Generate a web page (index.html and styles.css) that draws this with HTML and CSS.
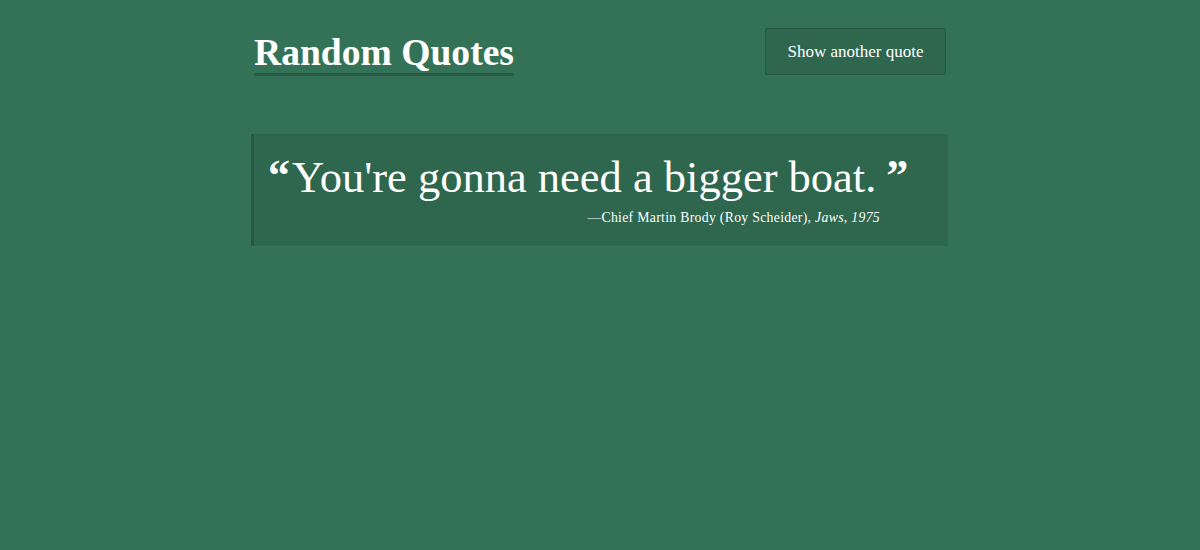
FILE: index.html
```html
<!DOCTYPE html>
<html lang="en">
<head>
<meta charset="utf-8">
<title>Random Quotes</title>
<link rel="stylesheet" href="styles.css">
</head>
<body>
<div class="page">
  <header class="top">
    <h1 class="title">Random Quotes</h1>
    <button class="btn" type="button">Show another quote</button>
  </header>
  <blockquote class="quote">
    <p class="quote-text"><span class="qmark">“</span>You're gonna need a bigger boat.<span class="qmark qmark-close">”</span></p>
    <p class="cite">—Chief Martin Brody (Roy Scheider), <em>Jaws</em>, <span class="year">1975</span></p>
  </blockquote>
</div>
</body>
</html>
```
FILE: styles.css
```css
html, body {
  margin: 0;
  padding: 0;
  background: #347257;
  color: #ffffff;
  font-family: "Liberation Serif", "DejaVu Serif", serif;
}
.page {
  width: 696px;
  margin: 0 auto;
  padding-top: 28px;
}
.top {
  display: flex;
  justify-content: space-between;
  align-items: flex-start;
  padding-left: 2px;
  padding-right: 3px;
}
.title {
  margin: 0;
  margin-top: 5px;
  font-size: 37.6px;
  font-weight: bold;
  line-height: 40px;
  border-bottom: 3px solid #285a43;
  padding-bottom: 0;
}
.btn {
  width: 181px;
  height: 47px;
  background: #2e664e;
  border: 1px solid #24553f;
  border-radius: 2px;
  color: #ffffff;
  font-family: inherit;
  font-size: 17px;
  padding: 0;
  margin-right: -1px;
}
.quote {
  box-sizing: border-box;
  margin: 58px 0 0 -1px;
  background: #2e664e;
  border-left: 3px solid #265740;
  padding: 18px 16px 20px 14px;
  width: 697px;
}
.quote-text {
  margin: 0;
  font-size: 44.5px;
  line-height: 50px;
  white-space: nowrap;
}
.qmark {
  font-weight: bold;
  font-size: 44px;
  vertical-align: 2px;
  line-height: 0;
  margin-right: 2px;
}
.qmark-close {
  margin-left: 10px;
  margin-right: 0;
}
.cite {
  margin: 8px 0 0 0;
  text-align: right;
  padding-right: 52px;
  font-size: 13.75px;
  line-height: 16px;
  letter-spacing: 0.3px;
}
.cite em, .cite .year {
  font-style: italic;
}
```
